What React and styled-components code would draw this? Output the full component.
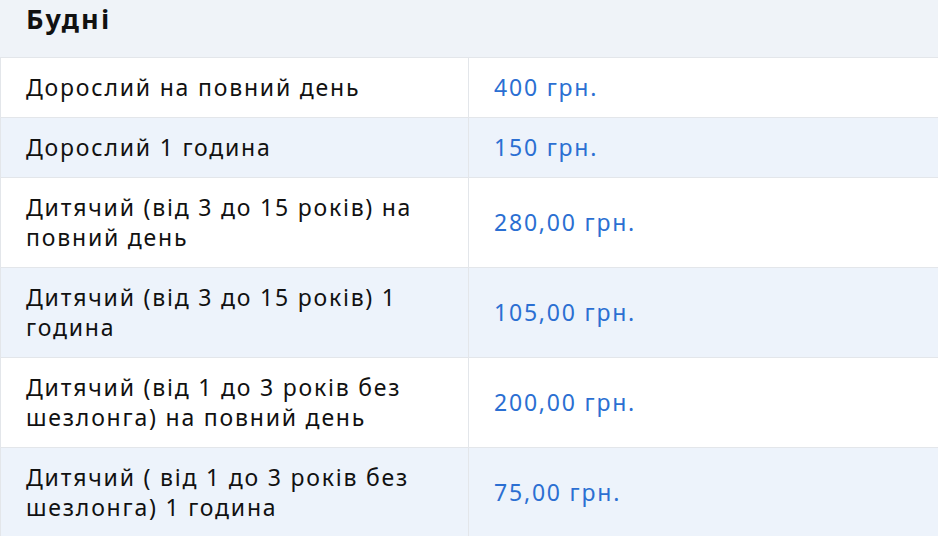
import React from "react";
import styled, { createGlobalStyle } from "styled-components";

const Global = createGlobalStyle`
  html, body { margin: 0; padding: 0; background: #fff; }
  body { font-family: "Noto Sans", "Open Sans", sans-serif; overflow: hidden; }
  #root { width: 938px; height: 536px; overflow: hidden; }
`;

const Section = styled.section`
  width: 938px;
`;

const Title = styled.h2`
  margin: 0;
  height: 58px;
  box-sizing: border-box;
  padding: 0 26px;
  background: #eff3f8;
  font-size: 27px;
  font-weight: 700;
  letter-spacing: 2.2px;
  color: #111;
  line-height: 37px;
  border-bottom: 1px solid #e3e6ea;
`;

const Table = styled.div`
  display: grid;
  grid-template-columns: 469px 1fr;
`;

const Cell = styled.div`
  box-sizing: border-box;
  min-height: 60px;
  padding: 14px 12px 15px 25px;
  display: flex;
  align-items: center;
  font-size: 23px;
  line-height: 30px;
  letter-spacing: 1.8px;
  background: ${(p) => (p.$alt ? "#edf3fb" : "#fff")};
  border-bottom: 1px solid #e3e6ea;
  border-left: ${(p) => (p.$first ? "1px solid #e3e6ea" : "none")};
  border-right: ${(p) => (p.$first ? "1px solid #e3e6ea" : "none")};
  color: ${(p) => (p.$price ? "#2b6fd2" : "#111")};
`;

const rows = [
  ["Дорослий на повний день", "400 грн."],
  ["Дорослий 1 година", "150 грн."],
  ["Дитячий (від 3 до 15 років) на повний день", "280,00 грн."],
  ["Дитячий (від 3 до 15 років) 1 година", "105,00 грн."],
  ["Дитячий (від 1 до 3 років без шезлонга) на повний день", "200,00 грн."],
  ["Дитячий ( від 1 до 3 років без шезлонга) 1 година", "75,00 грн."],
];

export default function App() {
  return (
    <>
      <Global />
      <Section>
        <Title>Будні</Title>
        <Table>
          {rows.map(([name, price], i) => (
            <React.Fragment key={i}>
              <Cell $first $alt={i % 2 === 1}>{name}</Cell>
              <Cell $price $alt={i % 2 === 1}>{price}</Cell>
            </React.Fragment>
          ))}
        </Table>
      </Section>
    </>
  );
}
